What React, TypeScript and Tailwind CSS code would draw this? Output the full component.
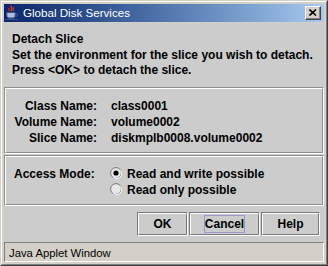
import React from "react";

function JavaCup() {
  return (
    <svg width="16" height="16" viewBox="0 0 16 16" className="shrink-0">
      <path d="M7.5 0.5 C5.5 2.5 9.5 3.5 7 6" stroke="#e03a1e" strokeWidth="1.4" fill="none" />
      <path d="M9.5 2 C8.5 3.5 10.5 4 9 6" stroke="#e03a1e" strokeWidth="1.2" fill="none" />
      <path d="M5 3 C4 4.5 6 5 5 6.5" stroke="#e03a1e" strokeWidth="1" fill="none" />
      <path d="M2.5 7.5 H11.5 V10.5 C11.5 12.5 10 13.5 7 13.5 C4 13.5 2.5 12.5 2.5 10.5 Z" fill="#6a85c0" stroke="#3a4f86" strokeWidth="0.8" />
      <path d="M3.5 9 H10.5 M3.8 11 H10.2" stroke="#ffffff" strokeWidth="0.9" />
      <path d="M11.5 8.5 C14.5 8.5 14.5 11.5 11 11.5" stroke="#3a4f86" strokeWidth="1.1" fill="none" />
      <path d="M1 14.5 H14" stroke="#3a4f86" strokeWidth="1.2" />
    </svg>
  );
}

function CloseButton() {
  return (
    <div className="ml-auto mr-[3px] w-[16px] h-[14px] border border-t-white border-l-white border-r-[#404040] border-b-[#404040] bg-[#d4d0c8]">
      <div className="w-full h-full border-r border-b border-r-[#808080] border-b-[#808080] flex items-center justify-center">
        <svg width="8" height="7" viewBox="0 0 8 7">
          <path d="M0.5 0.5 L7 6.5 M7 0.5 L0.5 6.5" stroke="#000" strokeWidth="1.6" />
        </svg>
      </div>
    </div>
  );
}

function Etched({ className, children }: { className?: string; children?: React.ReactNode }) {
  return (
    <div className={"border border-t-[#8e8e8e] border-l-[#8e8e8e] border-r-white border-b-white " + (className ?? "")}>
      <div className="w-full h-full border border-t-white border-l-white border-r-[#8e8e8e] border-b-[#8e8e8e]">
        {children}
      </div>
    </div>
  );
}

function Radio({ checked }: { checked?: boolean }) {
  return (
    <svg width="12" height="12" viewBox="0 0 12 12" className="shrink-0 mt-[1px]">
      <circle cx="6" cy="6" r="5.4" fill="#e8e8e8" stroke="#7a7a7a" strokeWidth="1" />
      <path d="M10.2 3.2 A4.6 4.6 0 0 1 3.2 10.2" stroke="#ffffff" strokeWidth="1" fill="none" />
      {checked && <circle cx="6" cy="6" r="2.6" fill="#000" />}
    </svg>
  );
}

function Button({ w, children, focus }: { w: string; children: React.ReactNode; focus?: boolean }) {
  return (
    <div className={"h-[24px] border border-t-[#7a7a7a] border-l-[#7a7a7a] border-r-white border-b-white " + w}>
      <div className="w-full h-full border border-t-white border-l-white border-r-[#7a7a7a] border-b-[#7a7a7a] flex items-center justify-center">
        {focus ? (
          <span className="border border-[#9999cc] leading-[16px] px-0">{children}</span>
        ) : (
          <span className="leading-[16px]">{children}</span>
        )}
      </div>
    </div>
  );
}

export default function App() {
  return (
    <div className="w-[328px] h-[266px] border border-t-[#d4d0c8] border-l-[#d4d0c8] border-r-[#404040] border-b-[#404040] font-['Liberation_Sans',Arial,sans-serif]">
      <div className="h-full border border-t-white border-l-white border-r-[#808080] border-b-[#808080] bg-[#d4d0c8] p-[2px] flex flex-col">
        <div className="h-[18px] shrink-0 flex items-center bg-linear-to-r from-[#0a246a] to-[#a6caf0]">
          <JavaCup />
          <span className="ml-[3px] text-white text-[11.6px] leading-[18px]">Global Disk Services</span>
          <CloseButton />
        </div>
        <div className="h-[1px] shrink-0" />
        <div className="h-[219px] shrink-0 bg-[#cccccc] flex flex-col text-[12px] font-bold text-black">
          <div className="h-[64px] shrink-0 pt-[9px] pl-[8px] leading-[15.5px]">
            <div>Detach Slice</div>
            <div>Set the environment for the slice you wish to detach.</div>
            <div>Press &lt;OK&gt; to detach the slice.</div>
          </div>
          <Etched className="h-[67px] shrink-0">
            <div className="pt-[9px] grid grid-cols-[91px_auto] gap-x-[14px] leading-[16px]">
              <div className="text-right">Class Name:</div>
              <div>class0001</div>
              <div className="text-right">Volume Name:</div>
              <div>volume0002</div>
              <div className="text-right">Slice Name:</div>
              <div>diskmplb0008.volume0002</div>
            </div>
          </Etched>
          <div className="h-[1px] shrink-0" />
          <Etched className="h-[51px] shrink-0">
            <div className="pt-[9px] pl-[8px] flex leading-[16px]">
              <div className="w-[96px] shrink-0">Access Mode:</div>
              <div className="flex flex-col">
                <div className="h-[16px] flex items-start">
                  <Radio checked />
                  <span className="ml-[5px]">Read and write possible</span>
                </div>
                <div className="h-[16px] flex items-start">
                  <Radio />
                  <span className="ml-[5px]">Read only possible</span>
                </div>
              </div>
            </div>
          </Etched>
          <div className="mt-[6px] flex justify-end gap-[1px] pr-[4px]">
            <Button w="w-[51px]">OK</Button>
            <Button w="w-[71px]" focus>Cancel</Button>
            <Button w="w-[59px]">Help</Button>
          </div>
        </div>
        <div className="h-[20px] shrink-0 border border-t-[#808080] border-l-[#808080] border-r-white border-b-white bg-[#d4d0c8] pl-[4px] pt-[1px] text-[11.3px] leading-[18px] text-black overflow-hidden whitespace-nowrap">
          Java Applet Window
        </div>
      </div>
    </div>
  );
}
